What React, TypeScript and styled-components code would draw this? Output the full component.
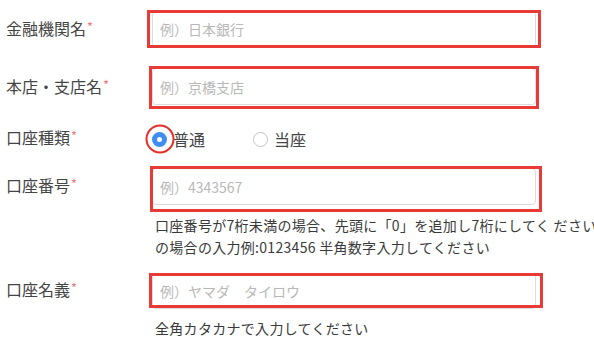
import React from 'react'
import styled, { createGlobalStyle } from 'styled-components'

const GlobalStyle = createGlobalStyle`
  html, body {
    margin: 0;
    padding: 0;
    background: #ffffff;
  }
  body {
    font-family: "Noto Sans CJK JP", "Noto Sans", sans-serif;
    color: #444444;
    width: 594px;
    height: 346px;
    overflow: hidden;
  }
`

const App = () => {
  return (
    <>
      <GlobalStyle />
      <StyledForm>
        <Row $mt={11}>
          <Label>金融機関名<Required>*</Required></Label>
          <Field>
            <InputWrap>
              <Input placeholder='例）日本銀行' />
              <Highlight $l={-5} $t={-1} $w={394} $h={38} />
            </InputWrap>
          </Field>
        </Row>

        <Row $mt={21}>
          <Label>本店・支店名<Required>*</Required></Label>
          <Field>
            <InputWrap>
              <Input placeholder='例）京橋支店' $h={37} />
              <Highlight $l={-3} $t={-2} $w={390} $h={43} />
            </InputWrap>
          </Field>
        </Row>

        <Row $mt={19} $h={28}>
          <Label>口座種類<Required>*</Required></Label>
          <RadioGroup>
            <RadioOption $mr={48}>
              <RadioDot $checked>
                <RingMark />
              </RadioDot>
              <span>普通</span>
            </RadioOption>
            <RadioOption>
              <RadioDot />
              <span>当座</span>
            </RadioOption>
          </RadioGroup>
        </Row>

        <Row $mt={16} $top>
          <Label $pt={8}>口座番号<Required>*</Required></Label>
          <Field>
            <InputWrap>
              <Input placeholder='例）4343567' $h={37} />
              <Highlight $l={-2} $t={-2} $w={392} $h={46} />
            </InputWrap>
            <Help $mt={9}>
              <HelpLine>口座番号が7桁未満の場合、先頭に「0」を追加し7桁にしてく ださい</HelpLine>
              <HelpLine>の場合の入力例:0123456 半角数字入力してください</HelpLine>
            </Help>
          </Field>
        </Row>

        <Row $mt={15} $top>
          <Label $pt={7}>口座名義<Required>*</Required></Label>
          <Field>
            <InputWrap>
              <Input placeholder='例）ヤマダ　タイロウ' />
              <Highlight $l={-3} $t={0} $w={394} $h={35} />
            </InputWrap>
            <Help $mt={8}>
              <HelpLine>全角カタカナで入力してください</HelpLine>
            </Help>
          </Field>
        </Row>
      </StyledForm>
    </>
  )
}

export default App

const StyledForm = styled.form`
  display: flex;
  flex-direction: column;
  width: 594px;
  margin: 0;
`

const Row = styled.div<{ $mt: number; $h?: number; $top?: boolean }>`
  display: flex;
  align-items: ${p => (p.$top ? 'flex-start' : 'center')};
  margin-top: ${p => p.$mt}px;
  height: ${p => (p.$h ? `${p.$h}px` : 'auto')};
`

const Label = styled.label<{ $pt?: number }>`
  display: flex;
  align-items: flex-start;
  width: 146px;
  padding-left: 6px;
  padding-top: ${p => p.$pt || 0}px;
  margin-top: -2px;
  font-size: 16px;
  line-height: 22px;
  color: #454545;
  white-space: nowrap;
`

const Required = styled.span`
  font-size: 13px;
  line-height: 13px;
  margin-left: 1px;
  margin-top: 3px;
  color: #ee7a7a;
`

const Field = styled.div`
  display: flex;
  flex-direction: column;
  width: 384px;
`

const InputWrap = styled.div`
  position: relative;
  width: 384px;
`

const Input = styled.input<{ $h?: number }>`
  display: block;
  box-sizing: border-box;
  width: 384px;
  height: ${p => p.$h || 36}px;
  padding: 0 7px;
  border: 1px solid #dcdcdc;
  border-radius: 4px;
  outline: none;
  font-family: "Noto Sans CJK JP", "Noto Sans", sans-serif;
  font-size: 14px;
  color: #333333;
  background: #ffffff;

  &::placeholder {
    color: #b8b8b8;
  }
`

// red annotation frames drawn over the inputs
const Highlight = styled.div<{ $l: number; $t: number; $w: number; $h: number }>`
  position: absolute;
  left: ${p => p.$l}px;
  top: ${p => p.$t}px;
  width: ${p => p.$w}px;
  height: ${p => p.$h}px;
  box-sizing: border-box;
  border: 3px solid #e83a36;
  pointer-events: none;
`

const RadioGroup = styled.div`
  display: flex;
  align-items: center;
  padding-top: 2px;
`

const RadioOption = styled.div<{ $mr?: number }>`
  display: flex;
  align-items: center;
  gap: 6px;
  margin-right: ${p => p.$mr || 0}px;
  font-size: 16px;
  line-height: 22px;
  color: #454545;
`

const RadioDot = styled.span<{ $checked?: boolean }>`
  position: relative;
  box-sizing: border-box;
  width: 15px;
  height: 15px;
  border-radius: 50%;
  border: ${p => (p.$checked ? '5px solid #3d8ef0' : '1px solid #c4c4c4')};
  background: #ffffff;
  flex-shrink: 0;
`

const RingMark = styled.span`
  position: absolute;
  left: 50%;
  top: 50%;
  width: 29px;
  height: 29px;
  transform: translate(-50%, -50%);
  box-sizing: border-box;
  border: 2.5px solid #e3302c;
  border-radius: 50%;
`

const Help = styled.div<{ $mt: number }>`
  margin-top: ${p => p.$mt}px;
  padding-left: 3px;
`

const HelpLine = styled.p`
  margin: 0;
  font-size: 14px;
  line-height: 22px;
  letter-spacing: 0.3px;
  color: #3a3a3a;
  white-space: nowrap;
`
